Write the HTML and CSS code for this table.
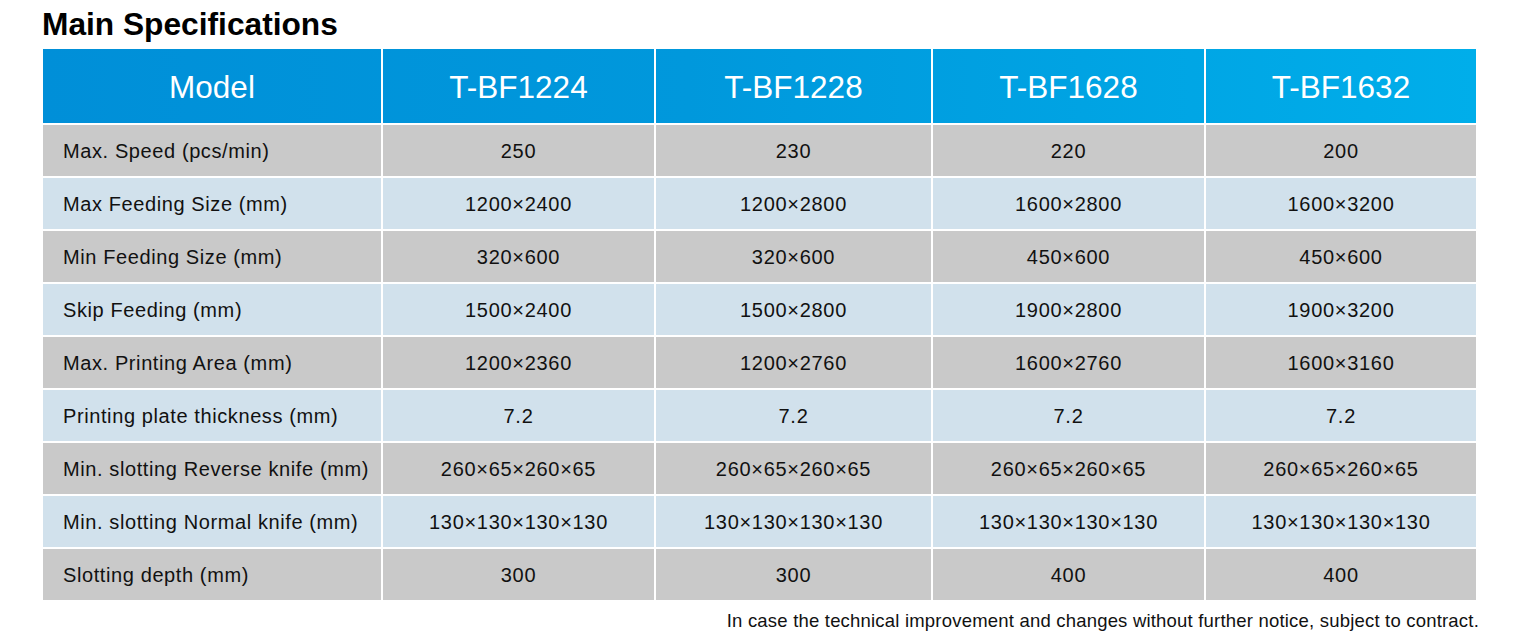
FILE: index.html
```html
<!DOCTYPE html>
<html lang="en">
<head>
<meta charset="utf-8">
<title>Main Specifications</title>
<link rel="stylesheet" href="styles.css">
</head>
<body>
<div class="page">
  <h1 class="title">Main Specifications</h1>
  <div class="specs">
    <div class="row head">
      <div class="cell">Model</div>
      <div class="cell">T-BF1224</div>
      <div class="cell">T-BF1228</div>
      <div class="cell">T-BF1628</div>
      <div class="cell">T-BF1632</div>
    </div>
    <div class="row gray">
      <div class="cell label">Max. Speed (pcs/min)</div>
      <div class="cell">250</div><div class="cell">230</div><div class="cell">220</div><div class="cell">200</div>
    </div>
    <div class="row blue">
      <div class="cell label">Max Feeding Size (mm)</div>
      <div class="cell">1200×2400</div><div class="cell">1200×2800</div><div class="cell">1600×2800</div><div class="cell">1600×3200</div>
    </div>
    <div class="row gray">
      <div class="cell label">Min Feeding Size (mm)</div>
      <div class="cell">320×600</div><div class="cell">320×600</div><div class="cell">450×600</div><div class="cell">450×600</div>
    </div>
    <div class="row blue">
      <div class="cell label">Skip Feeding (mm)</div>
      <div class="cell">1500×2400</div><div class="cell">1500×2800</div><div class="cell">1900×2800</div><div class="cell">1900×3200</div>
    </div>
    <div class="row gray">
      <div class="cell label">Max. Printing Area (mm)</div>
      <div class="cell">1200×2360</div><div class="cell">1200×2760</div><div class="cell">1600×2760</div><div class="cell">1600×3160</div>
    </div>
    <div class="row blue">
      <div class="cell label">Printing plate thickness (mm)</div>
      <div class="cell">7.2</div><div class="cell">7.2</div><div class="cell">7.2</div><div class="cell">7.2</div>
    </div>
    <div class="row gray">
      <div class="cell label">Min. slotting Reverse knife (mm)</div>
      <div class="cell">260×65×260×65</div><div class="cell">260×65×260×65</div><div class="cell">260×65×260×65</div><div class="cell">260×65×260×65</div>
    </div>
    <div class="row blue">
      <div class="cell label">Min. slotting Normal knife (mm)</div>
      <div class="cell">130×130×130×130</div><div class="cell">130×130×130×130</div><div class="cell">130×130×130×130</div><div class="cell">130×130×130×130</div>
    </div>
    <div class="row gray">
      <div class="cell label">Slotting depth (mm)</div>
      <div class="cell">300</div><div class="cell">300</div><div class="cell">400</div><div class="cell">400</div>
    </div>
  </div>
  <p class="note">In case the technical improvement and changes without further notice, subject to contract.</p>
</div>
</body>
</html>
```
FILE: styles.css
```css
html, body {
  margin: 0;
  padding: 0;
  background: #ffffff;
}

body {
  font-family: "Liberation Sans", Arial, sans-serif;
  color: #111111;
}

.page {
  width: 1433px;
  margin-left: 43px;
  padding-top: 8px;
}

.title {
  margin: 0 0 9px -1px;
  font-size: 31.7px;
  line-height: 32px;
  font-weight: 700;
  color: #000000;
}

.specs {
  display: flex;
  flex-direction: column;
  gap: 2px;
}

.row {
  display: grid;
  grid-template-columns: 338px 273px 277px 273px 272px;
  height: 51px;
}

.row.head {
  height: 74px;
  background: linear-gradient(90deg, #008fd8 0%, #0098dc 45%, #00aeea 100%);
  color: #ffffff;
}

.row.gray { background: #c9c9c9; }
.row.blue { background: #d1e1ec; }

.cell {
  display: flex;
  align-items: center;
  justify-content: center;
  padding-top: 2px;
  font-size: 20px;
  letter-spacing: 0.7px;
  color: #111111;
  white-space: nowrap;
}

.row.head .cell {
  padding-top: 2px;
  font-size: 31.5px;
  letter-spacing: 0;
  color: #ffffff;
}

.cell + .cell {
  border-left: 2px solid #ffffff;
}

.cell.label {
  justify-content: flex-start;
  padding-left: 20px;
  letter-spacing: 0.6px;
}

.note {
  margin: 10px -3px 0 0;
  text-align: right;
  font-size: 18.5px;
  letter-spacing: 0.2px;
  color: #111111;
}
```
